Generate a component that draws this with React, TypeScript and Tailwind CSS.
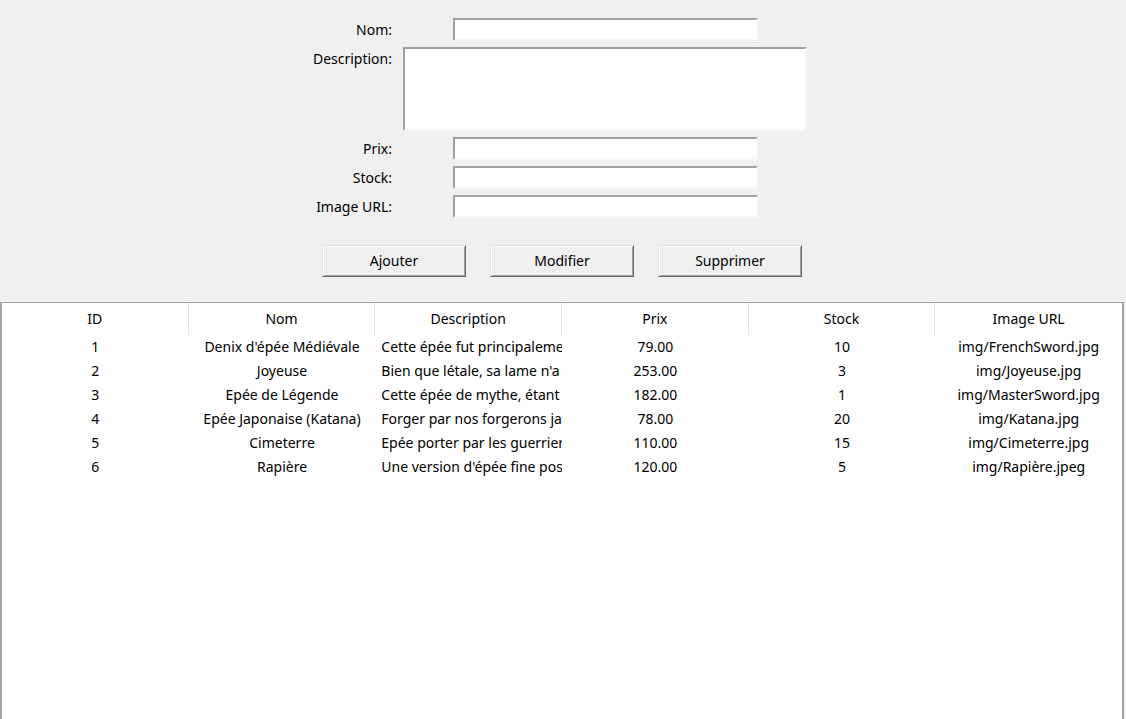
import type { ReactNode } from 'react';

interface Product {
  id: number;
  nom: string;
  description: string;
  prix: string;
  stock: number;
  image: string;
}

const products: Product[] = [
  {
    id: 1,
    nom: "Denix d'épée Médiévale",
    description: 'Cette épée fut principaleme',
    prix: '79.00',
    stock: 10,
    image: 'img/FrenchSword.jpg',
  },
  {
    id: 2,
    nom: 'Joyeuse',
    description: "Bien que létale, sa lame n'a",
    prix: '253.00',
    stock: 3,
    image: 'img/Joyeuse.jpg',
  },
  {
    id: 3,
    nom: 'Epée de Légende',
    description: 'Cette épée de mythe, étant',
    prix: '182.00',
    stock: 1,
    image: 'img/MasterSword.jpg',
  },
  {
    id: 4,
    nom: 'Epée Japonaise (Katana)',
    description: 'Forger par nos forgerons ja',
    prix: '78.00',
    stock: 20,
    image: 'img/Katana.jpg',
  },
  {
    id: 5,
    nom: 'Cimeterre',
    description: 'Epée porter par les guerriers',
    prix: '110.00',
    stock: 15,
    image: 'img/Cimeterre.jpg',
  },
  {
    id: 6,
    nom: 'Rapière',
    description: "Une version d'épée fine pos",
    prix: '120.00',
    stock: 5,
    image: 'img/Rapière.jpeg',
  },
];

const columns = ['ID', 'Nom', 'Description', 'Prix', 'Stock', 'Image URL'];

// champ de saisie façon Tk (relief sunken)
function Entry({ tall = false }: { tall?: boolean }) {
  return (
    <div
      className={`bg-white border-2 border-t-[#a0a0a0] border-l-[#a0a0a0] border-b-[#f7f7f7] border-r-[#f7f7f7] ${
        tall ? 'w-[404px] h-[84px]' : 'w-[305px] h-[23px] mx-auto'
      }`}
    />
  );
}

function FormRow({ label, children, top = false }: { label: string; children: ReactNode; top?: boolean }) {
  return (
    <div className={`flex ${top ? 'items-start' : 'items-center'}`}>
      <div className="w-[92px] h-[23px] flex items-center justify-end">{label}</div>
      <div className="ml-[11px] w-[404px]">{children}</div>
    </div>
  );
}

function TkButton({ children }: { children: ReactNode }) {
  return (
    <button className="w-[144px] h-[32px] bg-[#f0f0f0] border border-t-[#e3e3e3] border-l-[#e3e3e3] border-b-[#696969] border-r-[#696969] shadow-[inset_1px_1px_0_#ffffff,inset_-1px_-1px_0_#a0a0a0] text-black">
      {children}
    </button>
  );
}

export default function App() {
  return (
    <div
      className="w-[1126px] h-[719px] bg-[#f0f0f0] overflow-hidden flex flex-col text-[14px] leading-[18px] text-black"
      style={{ fontFamily: '"Noto Sans", "Open Sans", sans-serif' }}
    >
      {/* formulaire */}
      <div className="pl-[300px] pt-[18px] flex flex-col gap-[6px]">
        <FormRow label="Nom:">
          <Entry />
        </FormRow>
        <FormRow label="Description:" top>
          <Entry tall />
        </FormRow>
        <FormRow label="Prix:">
          <Entry />
        </FormRow>
        <FormRow label="Stock:">
          <Entry />
        </FormRow>
        <FormRow label="Image URL:">
          <Entry />
        </FormRow>
      </div>

      {/* boutons */}
      <div className="pl-[322px] mt-[27px] flex gap-[24px]">
        <TkButton>Ajouter</TkButton>
        <TkButton>Modifier</TkButton>
        <TkButton>Supprimer</TkButton>
      </div>

      {/* tableau */}
      <div className="mt-[25px] w-[1124px] flex-1 bg-white border-t border-t-[#a0a0a0] border-l-2 border-l-[#a0a5ae] border-r-2 border-r-[#a0a5ae]">
        <div className="grid grid-cols-6 h-[32px]">
          {columns.map((col, i) => (
            <div
              key={col}
              className={`flex items-center justify-center ${i < 5 ? 'border-r border-r-[#e5e5e5]' : ''}`}
            >
              {col}
            </div>
          ))}
        </div>
        {products.map((p) => (
          <div key={p.id} className="grid grid-cols-6 h-[24px] items-center">
            <div className="text-center">{p.id}</div>
            <div className="text-center whitespace-nowrap">{p.nom}</div>
            <div className="pl-[6px] whitespace-nowrap overflow-hidden">{p.description}</div>
            <div className="text-center">{p.prix}</div>
            <div className="text-center">{p.stock}</div>
            <div className="text-center whitespace-nowrap">{p.image}</div>
          </div>
        ))}
      </div>
    </div>
  );
}
